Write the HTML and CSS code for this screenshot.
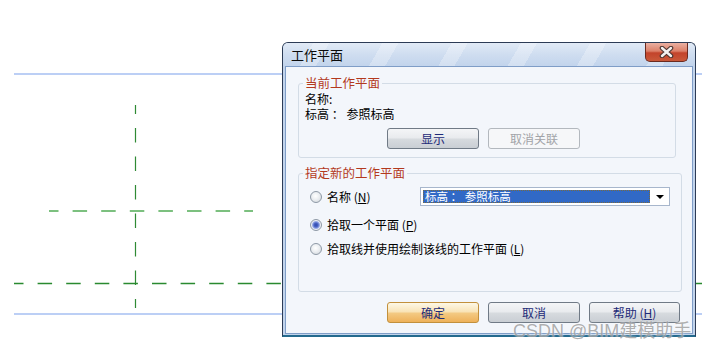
FILE: index.html
```html
<!DOCTYPE html>
<html>
<head>
    <title>工作平面</title>
    <link rel="stylesheet" href="styles.css">
</head>
<body>
    <div class="canvas">
        <svg class="drawing" width="715" height="350" viewBox="0 0 715 350">
            <line x1="14" y1="74" x2="702" y2="74" stroke="#bccff5" stroke-width="2"/>
            <line x1="14" y1="314" x2="702" y2="314" stroke="#bccff5" stroke-width="2"/>
            <line x1="135.5" y1="105" x2="135.5" y2="308" stroke="#2f8a34" stroke-width="1.2" stroke-dasharray="14.5 14" stroke-dashoffset="5.5"/>
            <line x1="49" y1="211" x2="253" y2="211" stroke="#7cc07f" stroke-width="2" stroke-dasharray="14.5 14.1" stroke-dashoffset="5"/>
            <line x1="14" y1="283.5" x2="702" y2="283.5" stroke="#2a8a30" stroke-width="1.4" stroke-dasharray="14.5 14.1" stroke-dashoffset="5"/>
        </svg>

        <div class="dialog">
            <div class="titlebar">
                <span class="title">工作平面</span>
                <div class="close">
                    <svg width="17" height="12" viewBox="0 0 17 12">
                        <path d="M4 2 L13 10 M13 2 L4 10" stroke="#4b3531" stroke-width="4.6" stroke-linecap="round" fill="none"/>
                        <path d="M4 2 L13 10 M13 2 L4 10" stroke="#f4f1f0" stroke-width="2.4" stroke-linecap="round" fill="none"/>
                    </svg>
                </div>
            </div>
            <div class="client">
                <fieldset class="group group-current">
                    <legend>当前工作平面</legend>
                    <div class="line">名称:</div>
                    <div class="line">标高 ： 参照标高</div>
                    <div class="btn-row group-buttons">
                        <button class="btn">显示</button>
                        <button class="btn" disabled>取消关联</button>
                    </div>
                </fieldset>

                <fieldset class="group group-new">
                    <legend>指定新的工作平面</legend>
                    <div class="option option-name">
                        <span class="radio"></span>
                        <span class="option-label">名称 (<u>N</u>)</span>
                        <div class="select">
                            <span class="select-value">标高 ： 参照标高</span>
                            <span class="select-arrow"></span>
                        </div>
                    </div>
                    <div class="option option-pick">
                        <span class="radio checked"></span>
                        <span>拾取一个平面 (<u>P</u>)</span>
                    </div>
                    <div class="option option-line">
                        <span class="radio"></span>
                        <span>拾取线并使用绘制该线的工作平面 (<u>L</u>)</span>
                    </div>
                </fieldset>

                <div class="btn-row footer">
                    <button class="btn btn-default">确定</button>
                    <button class="btn">取消</button>
                    <button class="btn btn-help">帮助 (<u>H</u>)</button>
                </div>
            </div>
        </div>

        <div class="watermark">CSDN @BIM建模助手</div>
    </div>
</body>
</html>
```

FILE: styles.css
```css
body {
    margin: 0;
    background: #ffffff;
    font-family: "Noto Sans CJK SC", "Noto Sans", sans-serif;
    font-size: 12px;
    color: #000000;
}
.canvas {
    position: relative;
    width: 715px;
    height: 350px;
    overflow: hidden;
}
.drawing {
    position: absolute;
    left: 0;
    top: 0;
}

/* window */
.dialog {
    position: absolute;
    left: 282px;
    top: 42px;
    width: 414px;
    height: 295px;
    box-sizing: border-box;
    border: 1px solid #2c3b55;
    border-bottom: 2px solid #246a8e;
    border-radius: 6px 6px 0 0;
    padding: 0 2px 1px;
    background: #c2d4ec;
    display: flex;
    flex-direction: column;
}
.titlebar {
    height: 23px;
    display: flex;
    align-items: center;
    justify-content: space-between;
    padding-left: 8px;
    margin: 0 -2px;
    border-radius: 5px 5px 0 0;
    background:
        repeating-linear-gradient(120deg, rgba(255,255,255,0) 0 26px, rgba(255,255,255,0.28) 26px 40px, rgba(255,255,255,0) 40px 60px),
        linear-gradient(180deg, #e1eaf6 0%, #cfddf0 50%, #c2d4ec 100%);
}
.title {
    font-size: 13px;
    line-height: 16px;
    color: #0b0b0b;
}
.close {
    align-self: flex-start;
    width: 43px;
    height: 19px;
    margin-right: 7px;
    box-sizing: border-box;
    border: 1px solid #6b2a1f;
    border-top: none;
    border-radius: 0 0 5px 5px;
    background: linear-gradient(180deg, #eab0a2 0%, #dc8069 45%, #c3432b 55%, #c9593a 100%);
    display: flex;
    align-items: center;
    justify-content: center;
}
.client {
    flex: 1;
    border: 1px solid #7f9dc7;
    background: #f3f6fb;
    display: flex;
    flex-direction: column;
}

/* group boxes */
.group {
    margin: 0 0 0 12px;
    padding: 0 4px 0 4px;
    border: 1px solid #d3dce6;
    border-radius: 3px;
    box-sizing: border-box;
    min-width: 0;
}
.group legend {
    padding: 0 2px;
    font-size: 12.5px;
    line-height: 14px;
    color: #b3391d;
}
.group-current {
    margin-top: 9px;
    width: 378px;
    padding-top: 1px;
    padding-bottom: 8px;
}
.group-new {
    margin-top: 8px;
    width: 384px;
    padding-top: 7px;
    padding-bottom: 33px;
}
.line {
    padding-left: 2px;
    line-height: 15px;
}

/* buttons */
.btn-row {
    display: flex;
    gap: 9px;
}
.group-buttons {
    margin-top: 7px;
    padding-left: 84px;
}
.footer {
    margin-top: 10px;
    padding-left: 101px;
}
.btn {
    width: 92px;
    height: 21px;
    padding: 0;
    box-sizing: border-box;
    border: 1px solid #707a86;
    border-radius: 3px;
    font-family: "Noto Sans CJK SC", "Noto Sans", sans-serif;
    font-size: 12px;
    line-height: 17px;
    color: #1d2a78;
    background: linear-gradient(180deg, #f4f5f7 0%, #e9ebee 45%, #d6dade 55%, #c9ced4 100%);
}
.btn:disabled {
    color: #a2a4a8;
    border-color: #b3b8be;
    background: #f6f7f9;
}
.btn-default {
    border-color: #c2903c;
    background: linear-gradient(180deg, #fdf8e6 0%, #f9e4b8 45%, #f3c982 55%, #eeb15a 100%);
}
.btn-help {
    width: 91px;
}

/* options */
.option {
    display: flex;
    align-items: center;
    height: 19px;
    padding-left: 7px;
}
.option-pick {
    margin-top: 9px;
}
.option-line {
    margin-top: 5px;
}
.option u {
    text-underline-offset: 1px;
}
.radio {
    width: 12px;
    height: 12px;
    margin-right: 5px;
    box-sizing: border-box;
    border: 1px solid #8e99a6;
    border-radius: 50%;
    background: radial-gradient(circle at 45% 40%, #ffffff 0, #eceff2 45%, #cdd2d8 100%);
    flex-shrink: 0;
}
.radio.checked {
    background: radial-gradient(circle, #2f48ad 0, #4a63c4 2px, #98aae6 3.5px, #eef0f6 4.5px, #d6dae0 100%);
}
.option-label {
    width: 93px;
}
.select {
    width: 250px;
    height: 19px;
    box-sizing: border-box;
    border: 1px solid #a7b6cc;
    background: #ffffff;
    padding: 2px 0 2px 2px;
    display: flex;
    align-items: stretch;
}
.select-value {
    flex: 1;
    box-sizing: border-box;
    border: 1px dotted #7a6a3c;
    background: #3169c6;
    color: #ffffff;
    font-size: 11.5px;
    line-height: 11px;
    padding-left: 1px;
    white-space: nowrap;
}
.select-arrow {
    width: 19px;
    position: relative;
}
.select-arrow::after {
    content: "";
    position: absolute;
    left: 6px;
    top: 5px;
    border-left: 4px solid transparent;
    border-right: 4px solid transparent;
    border-top: 4px solid #000000;
}

.watermark {
    position: absolute;
    left: 513px;
    top: 320px;
    font-family: "Liberation Sans", "Noto Sans CJK SC", sans-serif;
    font-size: 18px;
    line-height: 22px;
    color: rgba(140, 140, 140, 0.7);
    text-shadow: 0 0 2px rgba(255, 255, 255, 0.9);
    white-space: nowrap;
}
```
